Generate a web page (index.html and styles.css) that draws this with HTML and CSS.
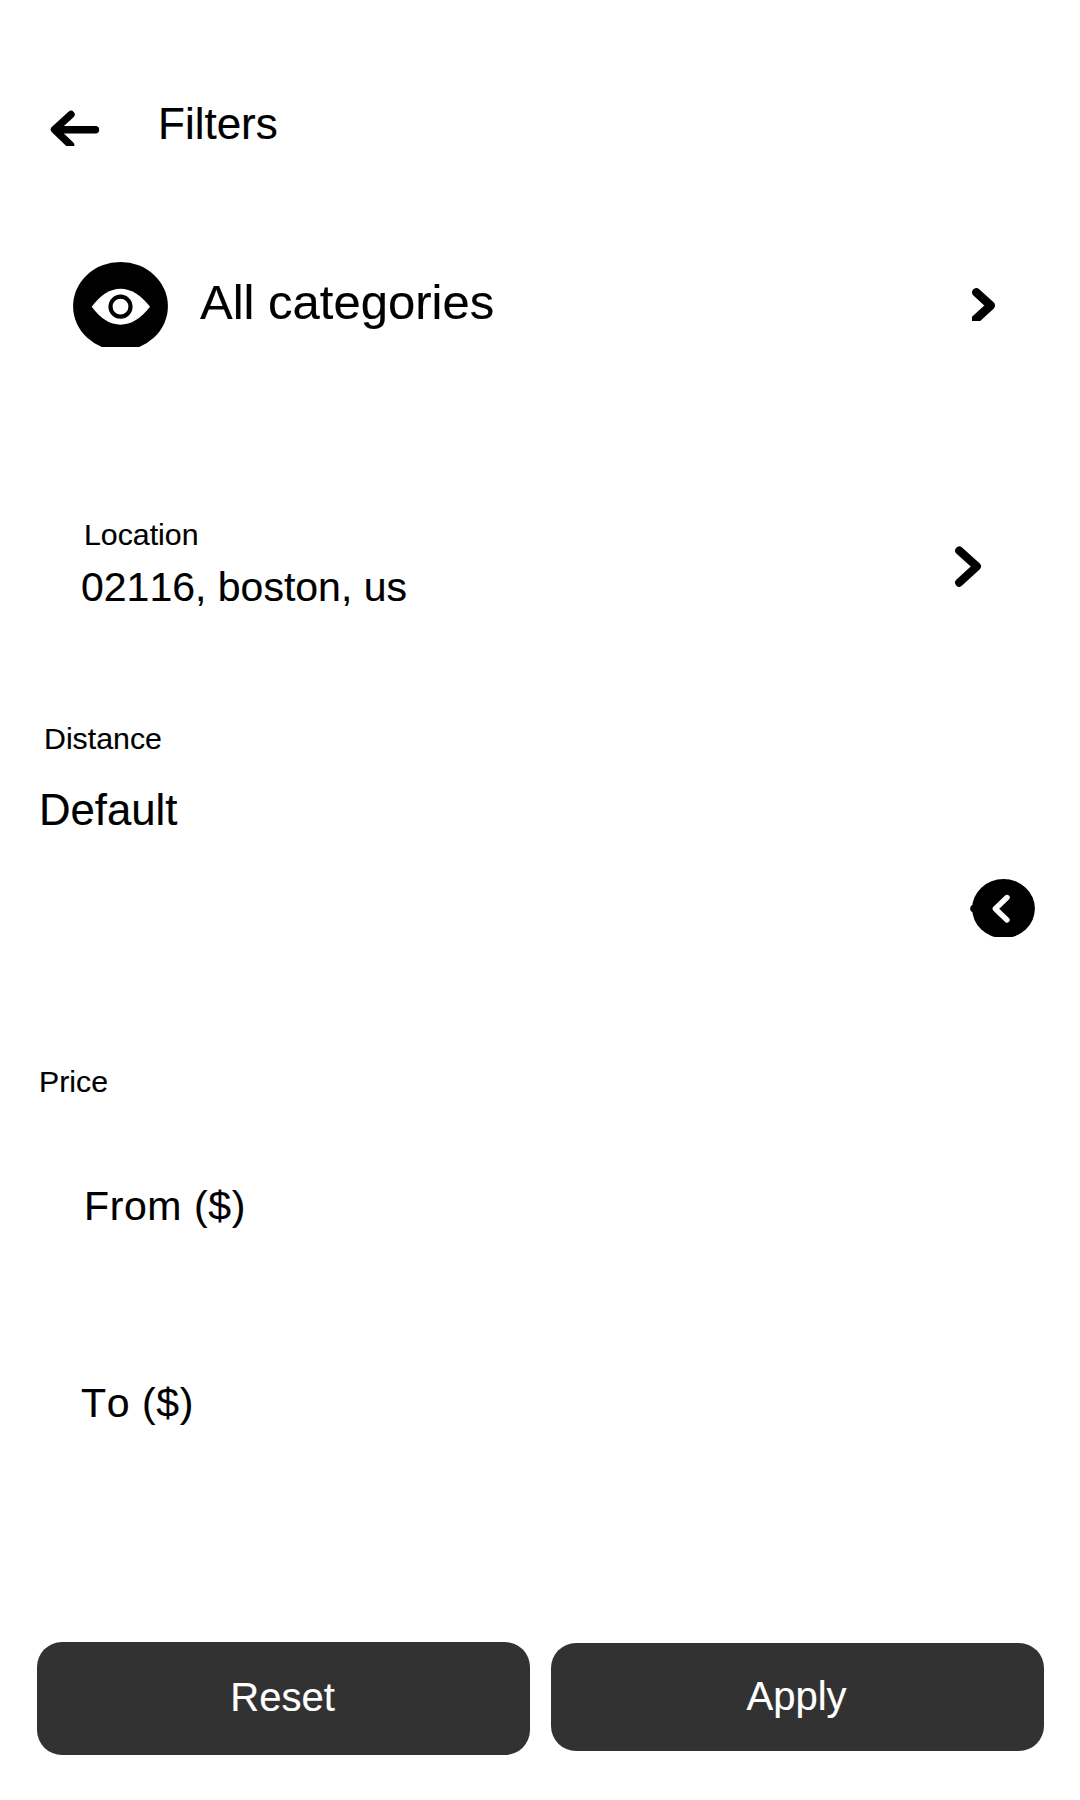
FILE: index.html
```html
<!DOCTYPE html>
<html lang="en">
<head>
<meta charset="utf-8">
<title>Filters</title>
<link rel="stylesheet" href="styles.css">
</head>
<body>
<main class="screen">
  <header class="header">
    <svg class="back" viewBox="0 0 50 36" fill="none" stroke="#000" stroke-width="7.4" stroke-linecap="round" stroke-linejoin="round"><path d="M21 4.5 4.5 19.6 20.5 35"/><path d="M6 19.8H45.5"/><path d="M4.5 19.6 14 11.5V27.5Z" fill="#000" stroke="none"/></svg>
    <h1 class="title">Filters</h1>
  </header>
  <section class="row category">
    <svg class="eye" viewBox="0 0 95 85"><ellipse cx="47.5" cy="44.3" rx="47.4" ry="44.3"/><path d="M18.7 44.8Q32 26.7 47.5 26.7T77 44.8Q63 62.7 47.5 62.7T18.7 44.8Z" fill="#fff"/><circle cx="47.5" cy="44.7" r="10" fill="#fff" stroke="#000" stroke-width="4.2"/></svg>
    <span class="category-name">All categories</span>
    <svg class="chevron-small" viewBox="0 0 24 33" fill="none" stroke="#000" stroke-width="8.6" stroke-linecap="round" stroke-linejoin="round"><path d="M4.3 4.3 18.7 17.5 3.5 31.5"/></svg>
  </section>
  <section class="row location">
    <div class="location-text">
      <div class="label">Location</div>
      <div class="value">02116, boston, us</div>
    </div>
    <svg class="chevron" viewBox="0 0 27 41" fill="none" stroke="#000" stroke-width="8.2" stroke-linecap="round" stroke-linejoin="round"><path d="M4.3 4.6 21.8 20.4 4.3 36.6"/></svg>
  </section>
  <section class="distance">
    <div class="label distance-label">Distance</div>
    <div class="distance-value">Default</div>
    <svg class="knob" viewBox="0 0 65 58"><ellipse cx="33.5" cy="29.6" rx="31.4" ry="29.6"/><circle cx="4" cy="29.5" r="3.8"/><path d="M37 18.5 25.3 29.8 37 41" fill="none" stroke="#fff" stroke-width="5.4" stroke-linecap="round" stroke-linejoin="round"/></svg>
  </section>
  <section class="price">
    <div class="label">Price</div>
    <div class="value from">From ($)</div>
    <div class="value to">To ($)</div>
  </section>
  <footer class="actions">
    <button class="button reset">Reset</button>
    <button class="button apply">Apply</button>
  </footer>
</main>
</body>
</html>
```
FILE: styles.css
```css
* { box-sizing: border-box; }
body {
  margin: 0;
  background: #fff;
  color: #000;
  font-family: "Liberation Sans", Arial, sans-serif;
  font-kerning: none;
  -webkit-text-stroke: 0.15px currentColor;
}
svg { display: block; flex: none; }
.screen {
  width: 1080px;
  height: 1800px;
  overflow: hidden;
  display: flex;
  flex-direction: column;
}
.header { height: 200px; padding: 100px 0 0 50px; display: flex; }
.back { width: 50px; height: 36px; margin-top: 10px; }
.title { margin: 0 0 0 58px; font-size: 44px; font-weight: 400; line-height: 48px; }
.row { display: flex; align-items: flex-start; justify-content: space-between; }
.category { height: 250px; padding: 62px 84px 0 73px; }
.eye { width: 95px; height: 85px; }
.category-name { flex: 1; margin: 12px 0 0 32px; font-size: 49px; line-height: 56px; }
.chevron-small { width: 24px; height: 33px; margin-top: 26px; }
.location { height: 220px; padding: 66px 98px 0 81px; }
.label { padding-top: 1px; font-size: 30.3px; line-height: 36px; }
.value { font-size: 41px; line-height: 48px; }
.location .label { padding-left: 3px; margin-bottom: 10px; }
.chevron { width: 27px; height: 41px; margin-top: 30px; }
.distance { height: 330px; padding: 50px 45px 0 39px; }
.distance-label { padding-left: 5px; }
.distance-value { margin-top: 29px; font-size: 43.7px; line-height: 48px; }
.knob { width: 65px; height: 58px; margin: 45px 0 0 auto; }
.price { height: 642px; padding: 63px 0 0 39px; }
.from { margin: 82px 0 0 45px; letter-spacing: 0.6px; }
.to { margin: 149px 0 0 42px; letter-spacing: 0.6px; }
.actions { display: flex; gap: 21px; padding: 0 36px 0 37px; align-items: flex-start; }
.button {
  border: 0;
  border-radius: 25px;
  background: #323232;
  color: #fff;
  font: 400 40px/46px "Liberation Sans", Arial, sans-serif;
}
.reset { width: 493px; height: 113px; padding: 0 2px 4px 0; }
.apply { width: 493px; height: 108px; margin-top: 1px; padding: 0 2px 2px 0; }
```
